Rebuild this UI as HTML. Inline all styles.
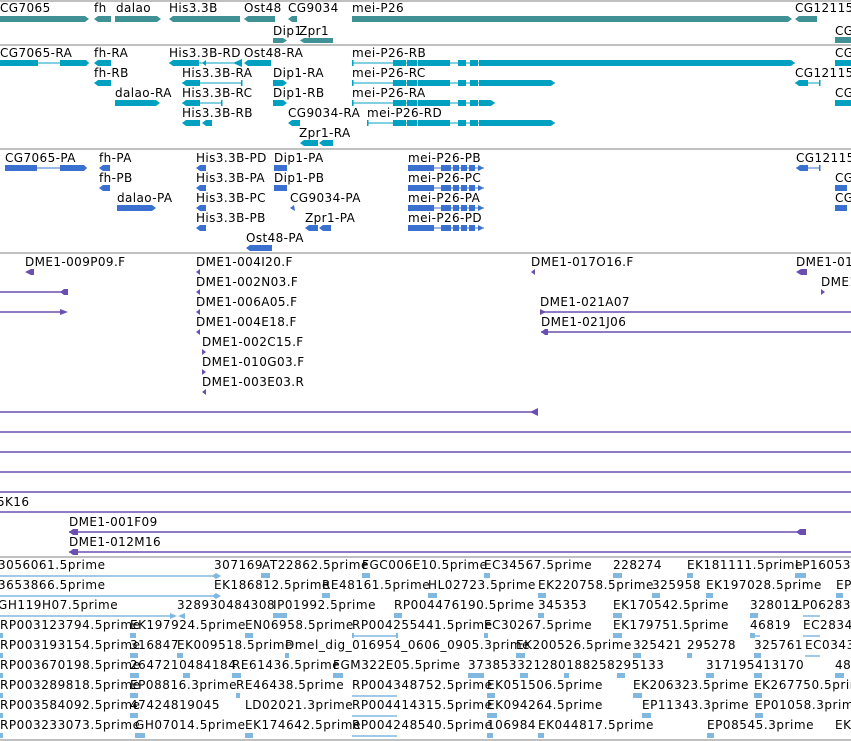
<!DOCTYPE html>
<html><head><meta charset="utf-8"><style>
html,body{margin:0;padding:0;background:#fff;width:851px;height:741px;overflow:hidden}
svg text{font-family:"DejaVu Sans","Liberation Sans",sans-serif;font-size:12px;fill:#000;letter-spacing:0.4px}
.d text{letter-spacing:0.4px;font-size:12px}
.e text{letter-spacing:0.55px}
</style></head><body>
<svg width="851" height="741" xmlns="http://www.w3.org/2000/svg">
<g stroke="#c0c0c0" stroke-width="2">
<line x1="0" y1="1" x2="851" y2="1"/><line x1="0" y1="45" x2="851" y2="45"/><line x1="0" y1="149" x2="851" y2="149"/><line x1="0" y1="253" x2="851" y2="253"/><line x1="0" y1="557" x2="851" y2="557"/><line x1="0" y1="740" x2="851" y2="740"/>
</g>
<g fill="#3f9196">
<rect x="0" y="16" width="85" height="6"/><polygon points="85,16 89,19 85,22"/>
<rect x="98" y="16" width="13" height="6"/><polygon points="98,16 94,19 98,22"/>
<rect x="115" y="16" width="42" height="6"/><polygon points="157,16 161,19 157,22"/>
<rect x="173" y="16" width="67" height="6"/><polygon points="173,16 169,19 173,22"/>
<rect x="248" y="16" width="27" height="6"/><polygon points="248,16 244,19 248,22"/>
<polygon points="292,16 288,19 292,22 297,22 297,16"/>
<rect x="352" y="16" width="436" height="6"/><polygon points="788,16 792,19 788,22"/><polygon points="795,19 799,16 817,16 817,22 799,22"/>
<rect x="273" y="38" width="10" height="5"/><polygon points="283,38 287,40.5 283,43"/>
<rect x="304" y="38" width="29" height="5"/><polygon points="304,38 300,40.5 304,43"/>
<rect x="835" y="37" width="16" height="6"/>
</g>
<text x="0" y="12">CG7065</text><text x="94" y="12">fh</text><text x="116" y="12">dalao</text><text x="169" y="12">His3.3B</text><text x="244" y="12">Ost48</text><text x="288" y="12">CG9034</text><text x="352" y="12">mei-P26</text><text x="795" y="12">CG12115</text>
<text x="273" y="35">Dip1</text><text x="299" y="35">Zpr1</text><text x="835" y="35">CG</text>
<g fill="#00a0c0" stroke="none">
<line x1="0" y1="63" x2="89" y2="63" stroke="#00a0c0"/>
<rect x="0" y="60" width="38" height="6"/><rect x="60" y="60" width="26" height="6"/><polygon points="86,60 89,63 86,66"/>
<polygon points="94,63 98,60 111,60 111,66 98,66"/>
<line x1="169" y1="63" x2="242" y2="63" stroke="#00a0c0"/>
<polygon points="169,63 173,60 199,60 199,66 173,66"/><polygon points="233,63 242,59 242,67"/><polygon points="202,63 206,60 206,66"/>
<polygon points="244,63 248,60 271,60 271,66 248,66"/>
<line x1="352" y1="63" x2="795" y2="63" stroke="#00a0c0"/><rect x="352" y="60" width="1.5" height="6"/>
<rect x="393" y="60" width="13" height="6"/><rect x="407" y="60" width="10" height="6"/><rect x="418" y="60" width="32" height="6"/><rect x="458" y="60" width="8" height="6"/><rect x="470" y="60" width="8" height="6"/><rect x="479" y="60" width="312" height="6"/><polygon points="791,60 795,63 791,66"/>
<rect x="835" y="60" width="16" height="6"/>
<polygon points="94,83 98,80 111,80 111,86 98,86"/>
<line x1="182" y1="83" x2="242" y2="83" stroke="#00a0c0"/><polygon points="182,83 186,80 200,80 200,86 186,86"/><rect x="241" y="80" width="1.5" height="6"/>
<rect x="273" y="80" width="10" height="6"/><polygon points="283,80 287,83 283,86"/>
<line x1="352" y1="83" x2="555" y2="83" stroke="#00a0c0"/><rect x="352" y="80" width="1.5" height="6"/>
<rect x="393" y="80" width="13" height="6"/><rect x="407" y="80" width="10" height="6"/><rect x="418" y="80" width="32" height="6"/><rect x="458" y="80" width="8" height="6"/><rect x="470" y="80" width="8" height="6"/><rect x="479" y="80" width="72" height="6"/><polygon points="551,80 555,83 551,86"/>
<line x1="795" y1="83" x2="820" y2="83" stroke="#00a0c0"/><polygon points="795,83 799,80 808,80 808,86 799,86"/><rect x="819" y="80" width="1.5" height="6"/>
<rect x="115" y="100" width="41" height="6"/><polygon points="156,100 160,103 156,106"/>
<line x1="182" y1="103" x2="222" y2="103" stroke="#00a0c0"/><polygon points="182,103 186,100 200,100 200,106 186,106"/><rect x="221" y="100" width="1.5" height="6"/>
<rect x="273" y="100" width="10" height="6"/><polygon points="283,100 287,103 283,106"/>
<line x1="352" y1="103" x2="495" y2="103" stroke="#00a0c0"/><rect x="352" y="100" width="1.5" height="6"/>
<rect x="393" y="100" width="13" height="6"/><rect x="407" y="100" width="10" height="6"/><rect x="418" y="100" width="32" height="6"/><rect x="458" y="100" width="8" height="6"/><rect x="470" y="100" width="8" height="6"/><rect x="479" y="100" width="12" height="6"/><polygon points="491,100 495,103 491,106"/>
<rect x="835" y="100" width="16" height="6"/>
<polygon points="182,123 186,120 200,120 200,126 186,126"/><polygon points="202,123 206,120 212,120 212,126 206,126"/>
<polygon points="288,123 292,120 300,120 300,126 292,126"/>
<line x1="367" y1="123" x2="555" y2="123" stroke="#00a0c0"/><rect x="367" y="120" width="1.5" height="6"/>
<rect x="393" y="120" width="13" height="6"/><rect x="407" y="120" width="10" height="6"/><rect x="418" y="120" width="32" height="6"/><rect x="458" y="120" width="8" height="6"/><rect x="470" y="120" width="8" height="6"/><rect x="479" y="120" width="72" height="6"/><polygon points="551,120 555,123 551,126"/>
<polygon points="300,143 304,140 318,140 318,146 304,146"/><polygon points="319,143 323,140 333,140 333,146 323,146"/>
</g>
<text x="0" y="57">CG7065-RA</text><text x="94" y="57">fh-RA</text><text x="169" y="57">His3.3B-RD</text><text x="244" y="57">Ost48-RA</text><text x="352" y="57">mei-P26-RB</text><text x="835" y="57">CG</text>
<text x="94" y="77">fh-RB</text><text x="182" y="77">His3.3B-RA</text><text x="273" y="77">Dip1-RA</text><text x="352" y="77">mei-P26-RC</text><text x="795" y="77">CG12115</text>
<text x="115" y="97">dalao-RA</text><text x="182" y="97">His3.3B-RC</text><text x="273" y="97">Dip1-RB</text><text x="352" y="97">mei-P26-RA</text><text x="835" y="97">CG</text>
<text x="182" y="117">His3.3B-RB</text><text x="288" y="117">CG9034-RA</text><text x="367" y="117">mei-P26-RD</text>
<text x="299" y="137">Zpr1-RA</text>
<g fill="#3a70d0">
<line x1="5" y1="168" x2="87" y2="168" stroke="#3a70d0"/><rect x="5" y="165" width="32" height="6"/><rect x="60" y="165" width="24" height="6"/><polygon points="84,165 87,168 84,171"/>
<polygon points="99,168 103,165 110,165 110,171 103,171"/>
<polygon points="196,168 200,165 206,165 206,171 200,171"/>
<polygon points="274,165 287,165 287,171 274,171"/>
<g id="mp"><line x1="408" y1="168" x2="484" y2="168" stroke="#3a70d0"/><rect x="408" y="165" width="26" height="6"/><rect x="441" y="165" width="10" height="6"/><rect x="453" y="165" width="6" height="6"/><rect x="461" y="165" width="6" height="6"/><rect x="469" y="165" width="6" height="6"/><polygon points="478,165 484,168 478,171"/></g>
<polygon points="796,168 800,165 808,165 808,171 800,171"/><rect x="819" y="165" width="1.5" height="6"/><line x1="796" y1="168" x2="820" y2="168" stroke="#3a70d0"/>
<polygon points="99,188 103,185 110,185 110,191 103,191"/>
<polygon points="196,188 200,185 206,185 206,191 200,191"/>
<rect x="274" y="185" width="13" height="6"/>
<use href="#mp" y="20"/><use href="#mp" y="40"/><use href="#mp" y="60"/>
<rect x="835" y="185" width="12" height="6"/><rect x="835" y="205" width="12" height="6"/>
<rect x="117" y="205" width="35" height="6"/><polygon points="152,205 156,208 152,211"/>
<polygon points="196,208 200,205 206,205 206,211 200,211"/>
<polygon points="290,208 294,205 295,211"/>
<polygon points="196,228 200,225 206,225 206,231 200,231"/>
<polygon points="305,228 309,225 318,225 318,231 309,231"/><polygon points="319,228 323,225 331,225 331,231 323,231"/>
<polygon points="246,248 250,245 272,245 272,251 250,251"/>
</g>
<text x="5" y="162">CG7065-PA</text><text x="99" y="162">fh-PA</text><text x="196" y="162">His3.3B-PD</text><text x="274" y="162">Dip1-PA</text><text x="408" y="162">mei-P26-PB</text><text x="796" y="162">CG12115</text>
<text x="99" y="182">fh-PB</text><text x="196" y="182">His3.3B-PA</text><text x="274" y="182">Dip1-PB</text><text x="408" y="182">mei-P26-PC</text><text x="835" y="182">CG</text>
<text x="117" y="202">dalao-PA</text><text x="196" y="202">His3.3B-PC</text><text x="290" y="202">CG9034-PA</text><text x="408" y="202">mei-P26-PA</text><text x="835" y="202">CG</text>
<text x="196" y="222">His3.3B-PB</text><text x="305" y="222">Zpr1-PA</text><text x="408" y="222">mei-P26-PD</text>
<text x="246" y="242">Ost48-PA</text>
<g fill="#6a4fb0" stroke="#6a4fb0" stroke-width="1.5">
<polygon points="25,272 31,269 34,269 34,275 31,275" stroke="none"/>
<line x1="0" y1="292" x2="68" y2="292"/><polygon points="60,292 64,289 68,289 68,295 64,295" stroke="none"/>
<line x1="0" y1="312" x2="64" y2="312"/><polygon points="60,309 68,312 60,315" stroke="none"/>
<polygon points="196,272 200,269 200,275" stroke="none"/><polygon points="196,292 200,289 200,295" stroke="none"/><polygon points="196,312 200,309 200,315" stroke="none"/><polygon points="196,332 200,329 200,335" stroke="none"/>
<polygon points="202,349 206,352 202,355" stroke="none"/><polygon points="202,369 206,372 202,375" stroke="none"/><polygon points="202,392 206,389 206,395" stroke="none"/>
<polygon points="531,272 535,269 535,275" stroke="none"/>
<polygon points="796,272 801,269 807,269 807,275 801,275" stroke="none"/><polygon points="821,289 825,292 821,295" stroke="none"/>
<line x1="540" y1="312" x2="851" y2="312"/><polygon points="540,309 546,312 540,315" stroke="none"/>
<line x1="541" y1="332" x2="851" y2="332"/><polygon points="541,332 545,329 548,329 548,335 545,335" stroke="none"/>
<line x1="0" y1="412" x2="538" y2="412"/><polygon points="530,412 538,408 538,416" stroke="none"/>
<line x1="0" y1="432" x2="851" y2="432"/><line x1="0" y1="452" x2="851" y2="452"/><line x1="0" y1="472" x2="851" y2="472"/><line x1="0" y1="492" x2="851" y2="492"/><line x1="0" y1="512" x2="851" y2="512"/>
<line x1="69" y1="532" x2="806" y2="532"/><polygon points="69,532 73,529 78,529 78,535 73,535" stroke="none"/><polygon points="796,532 800,529 806,529 806,535 800,535" stroke="none"/>
<line x1="69" y1="552" x2="851" y2="552"/><polygon points="69,552 73,549 78,549 78,555 73,555" stroke="none"/>
</g>
<g class="d">
<text x="25" y="266">DME1-009P09.F</text><text x="196" y="266">DME1-004I20.F</text><text x="531" y="266">DME1-017O16.F</text><text x="796" y="266">DME1-01</text>
<text x="196" y="286">DME1-002N03.F</text><text x="821" y="286">DME1</text>
<text x="196" y="306">DME1-006A05.F</text><text x="540" y="306">DME1-021A07</text>
<text x="196" y="326">DME1-004E18.F</text><text x="541" y="326">DME1-021J06</text>
<text x="202" y="346">DME1-002C15.F</text><text x="202" y="366">DME1-010G03.F</text><text x="202" y="386">DME1-003E03.R</text>
<text x="-3" y="506">5K16</text><text x="69" y="526">DME1-001F09</text><text x="69" y="546">DME1-012M16</text>
</g>
<g fill="#80b8e0" stroke="#80b8e0" stroke-width="1.5">
<line x1="0" y1="576" x2="214" y2="576"/><polygon points="212,576 216,573 221,576 216,579" stroke="none"/>
<line x1="0" y1="596" x2="214" y2="596"/><polygon points="212,596 216,593 221,596 216,599" stroke="none"/>
<line x1="0" y1="616" x2="172" y2="616"/><polygon points="170,613 177,616 170,619" stroke="none"/><polygon points="178,616 185,613 185,619" stroke="none"/>
<line x1="352" y1="636" x2="397" y2="636"/><line x1="352" y1="696" x2="397" y2="696"/><line x1="352" y1="716" x2="397" y2="716"/><line x1="352" y1="736" x2="397" y2="736"/>
<line x1="750" y1="636" x2="760" y2="636"/><line x1="803" y1="636" x2="820" y2="636"/><line x1="805" y1="656" x2="820" y2="656"/><line x1="803" y1="616" x2="820" y2="616"/>
</g>
<g fill="#80b8e0">
<rect x="261" y="573" width="9" height="5"/><rect x="362" y="573" width="8" height="5"/><rect x="484" y="573" width="6" height="5"/><rect x="613" y="573" width="9" height="5"/><rect x="687" y="573" width="6" height="5"/><rect x="795" y="573" width="11" height="5"/>
<rect x="322" y="593" width="8" height="5"/><rect x="428" y="593" width="9" height="5"/><rect x="538" y="593" width="8" height="5"/><rect x="652" y="593" width="8" height="5"/><rect x="706" y="593" width="7" height="5"/><rect x="836" y="593" width="7" height="5"/>
<rect x="273" y="613" width="14" height="5"/><rect x="394" y="613" width="8" height="5"/><rect x="538" y="613" width="6" height="5"/><rect x="613" y="613" width="9" height="5"/><rect x="750" y="613" width="8" height="5"/>
<rect x="0" y="633" width="3" height="5"/><rect x="130" y="633" width="6" height="5"/><rect x="245" y="633" width="8" height="5"/><rect x="352" y="633" width="2" height="5"/><rect x="396" y="633" width="2" height="5"/><rect x="484" y="633" width="4" height="5"/><rect x="613" y="633" width="9" height="5"/><rect x="750" y="633" width="5" height="5"/>
<rect x="0" y="653" width="3" height="5"/><rect x="130" y="653" width="8" height="5"/><rect x="177" y="653" width="6" height="5"/><rect x="285" y="653" width="4" height="5"/><rect x="516" y="653" width="9" height="5"/><rect x="633" y="653" width="8" height="5"/><rect x="687" y="653" width="5" height="5"/><rect x="754" y="653" width="7" height="5"/>
<rect x="0" y="673" width="3" height="5"/><rect x="130" y="673" width="9" height="5"/><rect x="183" y="673" width="7" height="5"/><rect x="232" y="673" width="9" height="5"/><rect x="333" y="673" width="10" height="5"/><rect x="468" y="673" width="16" height="5"/><rect x="520" y="673" width="8" height="5"/><rect x="564" y="673" width="5" height="5"/><rect x="617" y="673" width="8" height="5"/><rect x="706" y="673" width="8" height="5"/><rect x="754" y="673" width="8" height="5"/><rect x="835" y="673" width="9" height="5"/>
<rect x="0" y="693" width="3" height="5"/><rect x="130" y="693" width="8" height="5"/><rect x="236" y="693" width="4" height="5"/><rect x="487" y="693" width="8" height="5"/><rect x="633" y="693" width="9" height="5"/><rect x="754" y="693" width="8" height="5"/>
<rect x="0" y="713" width="3" height="5"/><rect x="130" y="713" width="8" height="5"/><rect x="487" y="713" width="10" height="5"/><rect x="642" y="713" width="9" height="5"/><rect x="755" y="713" width="8" height="5"/>
<rect x="0" y="733" width="3" height="5"/><rect x="135" y="733" width="10" height="5"/><rect x="245" y="733" width="8" height="5"/><rect x="487" y="733" width="6" height="5"/><rect x="538" y="733" width="6" height="5"/><rect x="707" y="733" width="7" height="5"/>
</g>
<g class="e">
<text x="-2" y="569">3056061.5prime</text><text x="214" y="569">307169</text><text x="262" y="569">AT22862.5prime</text><text x="362" y="569">FGC006E10.5prime</text><text x="484" y="569">EC34567.5prime</text><text x="613" y="569">228274</text><text x="687" y="569">EK181111.5prime</text><text x="795" y="569">LP16053.</text>
<text x="-2" y="589">3653866.5prime</text><text x="214" y="589">EK186812.5prime</text><text x="322" y="589">RE48161.5prime</text><text x="428" y="589">HL02723.5prime</text><text x="538" y="589">EK220758.5prime</text><text x="652" y="589">325958</text><text x="706" y="589">EK197028.5prime</text><text x="836" y="589">EP</text>
<text x="-2" y="609">GH119H07.5prime</text><text x="177" y="609">328930484308</text><text x="273" y="609">IP01992.5prime</text><text x="394" y="609">RP004476190.5prime</text><text x="538" y="609">345353</text><text x="613" y="609">EK170542.5prime</text><text x="750" y="609">328012</text><text x="795" y="609">LP06283</text>
<text x="0" y="629">RP003123794.5prime</text><text x="130" y="629">EK197924.5prime</text><text x="245" y="629">EN06958.5prime</text><text x="352" y="629">RP004255441.5prime</text><text x="484" y="629">EC30267.5prime</text><text x="613" y="629">EK179751.5prime</text><text x="750" y="629">46819</text><text x="803" y="629">EC28348</text>
<text x="0" y="649">RP003193154.5prime</text><text x="130" y="649">316847</text><text x="177" y="649">EK009518.5prime</text><text x="285" y="649">Dmel_dig_016954_0606_0905.3prime</text><text x="516" y="649">EK200526.5prime</text><text x="633" y="649">325421</text><text x="687" y="649">295278</text><text x="754" y="649">325761</text><text x="805" y="649">EC0343</text>
<text x="0" y="669">RP003670198.5prime</text><text x="130" y="669">2647210484184</text><text x="232" y="669">RE61436.5prime</text><text x="333" y="669">FGM322E05.5prime</text><text x="468" y="669">373853321280188258295133</text><text x="706" y="669">317195413170</text><text x="835" y="669">48</text>
<text x="0" y="689">RP003289818.5prime</text><text x="130" y="689">EP08816.3prime</text><text x="236" y="689">RE46438.5prime</text><text x="352" y="689">RP004348752.5prime</text><text x="487" y="689">EK051506.5prime</text><text x="633" y="689">EK206323.5prime</text><text x="754" y="689">EK267750.5prime</text>
<text x="0" y="709">RP003584092.5prime</text><text x="130" y="709">47424819045</text><text x="245" y="709">LD02021.3prime</text><text x="352" y="709">RP004414315.5prime</text><text x="487" y="709">EK094264.5prime</text><text x="642" y="709">EP11343.3prime</text><text x="755" y="709">EP01058.3prime</text>
<text x="0" y="729">RP003233073.5prime</text><text x="135" y="729">GH07014.5prime</text><text x="245" y="729">EK174642.5prime</text><text x="352" y="729">RP004248540.5prime</text><text x="487" y="729">106984</text><text x="538" y="729">EK044817.5prime</text><text x="707" y="729">EP08545.3prime</text><text x="835" y="729">EK</text>
</g>
</svg>
</body></html>
